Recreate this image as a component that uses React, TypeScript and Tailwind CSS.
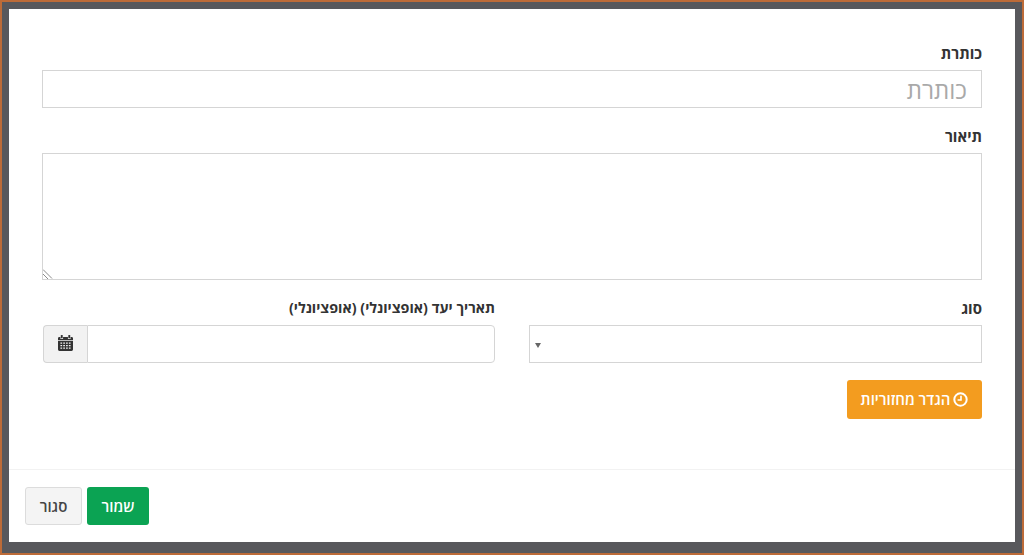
import React from 'react';

const labelClass = 'block text-[15px] leading-[20px] font-bold text-[#333] mb-[7px]';

const CalendarIcon = () => (
  <svg width="15" height="16" viewBox="0 0 16 17" fill="#333" className="mb-[3px]">
    <rect x="3" y="0" width="2" height="3.5" rx="0.6" />
    <rect x="11" y="0" width="2" height="3.5" rx="0.6" />
    <path d="M1.5 2H2.6V4.2H5.4V2H10.6V4.2H13.4V2H14.5A1.5 1.5 0 0 1 16 3.5V5.6H0V3.5A1.5 1.5 0 0 1 1.5 2Z" />
    <path
      fillRule="evenodd"
      d="M0 6.4H16V15.5A1.5 1.5 0 0 1 14.5 17H1.5A1.5 1.5 0 0 1 0 15.5ZM2.6 8V9.4H4.4V8ZM5.6 8V9.4H7.4V8ZM8.6 8V9.4H10.4V8ZM11.6 8V9.4H13.4V8ZM2.6 10.6V12H4.4V10.6ZM5.6 10.6V12H7.4V10.6ZM8.6 10.6V12H10.4V10.6ZM11.6 10.6V12H13.4V10.6ZM2.6 13.2V14.6H4.4V13.2ZM5.6 13.2V14.6H7.4V13.2ZM8.6 13.2V14.6H10.4V13.2ZM11.6 13.2V14.6H13.4V13.2Z"
    />
  </svg>
);

const App: React.FC = () => {
  return (
    <div
      dir="rtl"
      className="h-[555px] w-[1024px] overflow-hidden border-2 border-[#bd6b38] bg-[#58585c] p-[7px] font-['Open_Sans','Noto_Sans','DejaVu_Sans',sans-serif]"
    >
      <div className="flex h-[533px] flex-col bg-white">
        <div className="h-[460px] px-[33px] pt-[34px]">
          <label className={labelClass}>כותרת</label>
          <input
            placeholder="כותרת"
            className="block h-[38px] w-full border border-[#d5d5d5] px-[14px] text-[24px] text-[#555] outline-none placeholder:text-[#a9a9a9]"
          />

          <label className={`${labelClass} mt-[18px]`}>תיאור</label>
          <div className="relative">
            <textarea className="block h-[127px] w-full resize-none border border-[#d5d5d5] outline-none" />
            {/* resize grip, bottom left in rtl */}
            <svg width="11" height="11" viewBox="0 0 11 11" className="absolute bottom-[1px] left-[1px]" stroke="#8a8a8a">
              <path d="M0 1.5L9 10.5M0 6L5 11" />
            </svg>
          </div>

          <div className="mt-[18px] flex gap-[34px]">
            <div className="w-[453px]">
              <label className={labelClass}>סוג</label>
              <div className="flex h-[38px] items-center justify-end border border-[#d5d5d5] pl-[5px]">
                <svg width="6" height="5" viewBox="0 0 6 5" className="mt-[2px]">
                  <path d="M0 0h6L3 5z" fill="#666" />
                </svg>
              </div>
            </div>
            <div className="w-[452px]">
              <label className="mb-[7px] block text-[14.3px] leading-[20px] font-bold text-[#333]">
                תאריך יעד (אופציונלי) (אופציונלי)
              </label>
              <div className="flex h-[38px]">
                <input className="min-w-0 flex-1 rounded-r-[4px] border border-[#d5d5d5] outline-none" />
                <span className="flex w-[44px] items-center justify-center rounded-l-[4px] border border-r-0 border-[#d5d5d5] bg-[#f2f2f2]">
                  <CalendarIcon />
                </span>
              </div>
            </div>
          </div>

          <button className="mt-[17px] flex h-[39px] w-[135px] items-center justify-center gap-[3px] rounded-[3px] bg-[#f39c1f] text-[15px] font-semibold text-white">
            <svg width="15" height="15" viewBox="0 0 15 15" fill="none" stroke="#fff">
              <circle cx="7.5" cy="7.5" r="6.2" strokeWidth="2" />
              <path d="M8 3.8v4.2H4.6" strokeWidth="1.6" />
            </svg>
            הגדר מחזוריות
          </button>
        </div>

        <div className="flex flex-1 items-start gap-[5px] border-t border-[#f2f2f2] px-[16px] pt-[17px]">
          <div className="flex-1" />
          <button className="h-[38px] w-[62px] rounded-[3px] bg-[#0ba353] text-[15px] font-semibold text-white">
            שמור
          </button>
          <button className="h-[38px] w-[57px] rounded-[3px] border border-[#dcdcdc] bg-[#f4f4f4] text-[15px] font-semibold text-[#444]">
            סגור
          </button>
        </div>
      </div>
    </div>
  );
};

export default App;
